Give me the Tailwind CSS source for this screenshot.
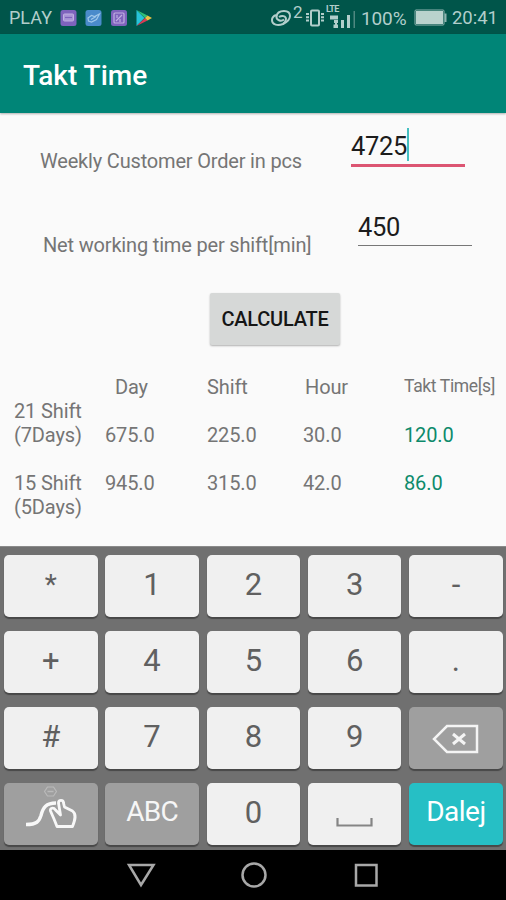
<!DOCTYPE html>
<html lang="en">
<head>
    <meta charset="UTF-8">
    <title>Takt Time</title>
    <script src="https://cdn.jsdelivr.net/npm/@tailwindcss/browser@4"></script>
</head>
<body class="bg-black">
    <div id="screen" class="w-[506px] h-[900px] overflow-hidden flex flex-col bg-[#fafafa] font-[Roboto,sans-serif] text-[#757575]">
        <!-- status bar -->
        <div id="statusBar" class="h-[34px] shrink-0 bg-[#00554a] text-[#b2cecb] flex items-center justify-between pl-[9px] pr-[8px] text-[18.5px] leading-none pt-[2px]">
            <div class="flex items-center">
                <span class="w-[51px] text-[18px]">PLAY</span>
                <svg width="94" height="18" viewBox="0 0 94 18" fill="none">
                    <rect x="0.5" y="1" width="16" height="16" rx="2.5" fill="#7e63bd"/>
                    <rect x="3.5" y="5" width="10" height="7" rx="1" fill="#a995d6" stroke="#c0b0e2"/>
                    <path d="M5 8.500h7" stroke="#7e63bd" stroke-width="1.200"/>
                    <rect x="25.5" y="1" width="16" height="16" rx="2.5" fill="#4a8bcb"/>
                    <path d="M28 9l3.500-2.500 3 1 5-2.500-3 5.500-5 2.500-3-1zM31 10.500l5-3" stroke="#a0c8ea" stroke-width="1.200"/>
                    <rect x="51" y="1" width="16" height="16" rx="2.5" fill="#7e63bd"/>
                    <rect x="54" y="4" width="10" height="10" rx="1" stroke="#c0b0e2" stroke-width="1.2"/>
                    <path d="M56 12l6-6M57 6v3M60 10v3" stroke="#c0b0e2" stroke-width="1.2"/>
                    <path d="M76.500 1v16l8-8z" fill="#27c3d8"/>
                    <path d="M76.500 1l8.500 8 2.500-2.500z" fill="#2fbf78"/>
                    <path d="M76.500 17l8.500-8 2.500 2.500z" fill="#d83c55"/>
                    <path d="M87.500 6.500l4.500 2.500-4.500 2.500L85 9z" fill="#e9c243"/>
                </svg>
            </div>
            <div class="flex items-center">
                <svg class="mr-px" width="22" height="20" viewBox="0 0 22 20" fill="none" stroke="#b2cecb" stroke-width="2">
                    <path d="M14 11.500C11 14 6 12 6.500 8.500 7 5 10 3 14 3c4 0 6 2 6 5s-3 6-7 8c-5 2-11 1-11-4 0-2 1.500-4 4-5"/>
                    <path d="M9 9c3-2 7-1 7 2 0 2-1 3.500-3 5"/>
                </svg>
                <span class="text-[17px] w-[12px] -mt-[11px]">2</span>
                <svg class="mr-[2px]" width="20" height="20" viewBox="0 0 20 20" fill="none" stroke="#b2cecb" stroke-width="2">
                    <rect x="6" y="2.500" width="8" height="15" rx="1"/>
                    <path d="M2.500 5v10M17.500 5v10" stroke-width="3" stroke-dasharray="2 1.300"/>
                </svg>
                <div class="relative w-[34px] h-[24px]">
                    <span class="absolute left-[-1px] top-[-1px] text-[9px] font-bold tracking-[-0.5px]">LTE</span>
                    <svg class="absolute left-0 top-0" width="32" height="24" viewBox="0 0 32 24" fill="#b2cecb">
                        <path d="M3 9.500h8v4H3zM7 14h4v3h-1v1.500h1V22H6.500v-3.500H8V17H7zM14 14h3v8h-3zM20 9h3v13h-3z"/>
                        <path d="M26.500 5H28v17h-1.500z" fill="#4f8880"/>
                    </svg>
                </div>
                <span class="w-[53px] text-[19px] tracking-[-0.1px]">100%</span>
                <svg width="38" height="20" viewBox="0 0 38 20" fill="none">
                    <rect x="1" y="2" width="29" height="15" rx="1" stroke="#8fb5b0"/>
                    <rect x="2" y="3" width="27" height="13" fill="#b9d2cd"/>
                    <path d="M30.500 5.500h2v8.500h-2z" fill="#8fb5b0"/>
                </svg>
                <span>20:41</span>
            </div>
        </div>
        <!-- app bar -->
        <div class="h-[79px] shrink-0 bg-[#008577] shadow-[0_1px_2px_rgba(0,0,0,0.3)] flex items-center pl-[23px] pt-[4px]">
            <h1 class="text-[28px] font-medium text-white leading-none">Takt Time</h1>
        </div>
        <!-- inputs -->
        <div class="h-[180px] shrink-0">
            <div class="flex h-[84px] pl-[40px]">
                <label class="w-[311px] pt-[36px] text-[20px] tracking-[-0.18px] leading-6">Weekly Customer Order in pcs</label>
                <div class="w-[114px] h-[54px] border-b-[3px] border-[#dc5572] pt-[15px] flex text-[25.500px] tracking-[-0.3px] text-[#1c1c1c]">
                    <span class="leading-[36px]">4725</span><i class="w-[1.500px] h-[33px] bg-[#45bfc1] shrink-0"></i>
                </div>
            </div>
            <div class="flex pl-[43px]">
                <label class="w-[315px] pt-[36px] text-[20px] tracking-[-0.17px] leading-6">Net working time per shift[min]</label>
                <div class="w-[114px] h-[49px] border-b border-[#777] pt-[13px] text-[25.500px] tracking-[-0.3px] leading-[34px] text-[#1c1c1c]">450</div>
            </div>
        </div>
        <button id="calculate" class="ml-[210px] w-[130px] h-[52px] shrink-0 rounded-[2px] bg-[#d6d8d7] shadow-[0_1px_2px_rgba(0,0,0,0.3)] text-[20px] tracking-[-0.25px] font-medium text-[#151515]">CALCULATE</button>
        <!-- results -->
        <div class="h-[201px] shrink-0 pt-[30px] text-[20px] tracking-[-0.12px] leading-6">
            <div class="grid grid-cols-[101px_98px_98px_1fr] pl-[115px] h-6 -mr-4">
                <span>Day</span><span class="-ml-[9px]">Shift</span><span class="-ml-[9px]">Hour</span><span class="-ml-[8px] text-[17.500px] tracking-[-0.35px] -mt-px">Takt Time[s]</span>
            </div>
            <div class="grid grid-cols-[91px_102px_96px_101px_1fr] pl-[14px] h-[72px] items-end pb-6">
                <span>21 Shift<br>(7Days)</span><span>675.0</span><span>225.0</span><span>30.0</span><span class="text-[#0d8a6b]">120.0</span>
            </div>
            <div class="grid grid-cols-[91px_102px_96px_101px_1fr] pl-[14px]">
                <span>15 Shift<br>(5Days)</span><span>945.0</span><span>315.0</span><span>42.0</span><span class="text-[#0d8a6b]">86.0</span>
            </div>
        </div>
        <!-- keyboard -->
        <div id="keyboard" class="h-[304px] shrink-0 bg-[#707070] border-t border-[#8a8a8a] pt-[8px] px-[4px] grid grid-cols-[repeat(5,93.5px)] auto-rows-[62px] gap-x-[7.800px] gap-y-[14px] text-[31px] leading-[60px] text-center text-[#606060] *:rounded-[5px] *:shadow-[0_2px_1px_#484848]">
            <div class="bg-[#f0f0f0] text-[28px]">*</div>
            <div class="bg-[#f0f0f0]">1</div>
            <div class="bg-[#f0f0f0]">2</div>
            <div class="bg-[#f0f0f0]">3</div>
            <div class="bg-[#f0f0f0]">-</div>
            <div class="bg-[#f0f0f0]">+</div>
            <div class="bg-[#f0f0f0]">4</div>
            <div class="bg-[#f0f0f0]">5</div>
            <div class="bg-[#f0f0f0]">6</div>
            <div class="bg-[#f0f0f0]">.</div>
            <div class="bg-[#f0f0f0]">#</div>
            <div class="bg-[#f0f0f0]">7</div>
            <div class="bg-[#f0f0f0]">8</div>
            <div class="bg-[#f0f0f0]">9</div>
            <div class="bg-[#9f9f9f]">
                <svg width="93" height="62" viewBox="0 0 93 62" fill="none" stroke="#f4f4f4" stroke-width="2.500">
                    <path d="M38 19h30v26H38L25 32z"/>
                    <path d="M44 27l12 10M56 27L44 37" stroke-width="3"/>
                </svg>
            </div>
            <div class="bg-[#9f9f9f]">
                <svg width="93" height="62" viewBox="0 0 93 62" fill="none" stroke="#f8f8f8" stroke-width="2.800" stroke-linejoin="round">
                    <path d="M40.500 8.500l3-4.500h6l3 4.500-3 4.500h-6z" stroke="#bababa" stroke-width="1.200"/>
                    <path d="M43.500 8.500h6" stroke="#bababa" stroke-width="1.500"/>
                    <path d="M22 41.500c11 0 13-3 15-9 2-8 5-12.500 15-12.500" stroke-width="3.400"/>
                    <path d="M53 43.500L50 36l-3.500-8c-1-3 3-4 5-1l5 5-2-12c0-3.500 5-3.500 5 0l1 4 8 4c4 3 3 8 0 15.500z"/>
                </svg>
            </div>
            <div class="bg-[#9f9f9f] text-[#f6f6f6] text-[28px] leading-[58px] tracking-[-0.7px]">ABC</div>
            <div class="bg-[#f0f0f0]">0</div>
            <div class="bg-[#f0f0f0]">
                <svg width="93" height="62" viewBox="0 0 93 62" fill="none" stroke="#858585" stroke-width="2.200">
                    <path d="M29.500 35v7.500h34V35"/>
                </svg>
            </div>
            <div class="bg-[#26bfc5] text-white text-[28px] leading-[58px] tracking-[-0.5px]">Dalej</div>
        </div>
        <!-- navigation bar -->
        <div class="h-[50px] shrink-0 bg-black">
            <svg width="506" height="50" viewBox="0 0 506 50" fill="none" stroke="#a8a8a8" stroke-width="2.500">
                <path d="M129 15h24.500L141 35z"/>
                <circle cx="254" cy="25" r="11.500"/>
                <rect x="356" y="15" width="20.500" height="20.500"/>
            </svg>
        </div>
    </div>
</body>
</html>
